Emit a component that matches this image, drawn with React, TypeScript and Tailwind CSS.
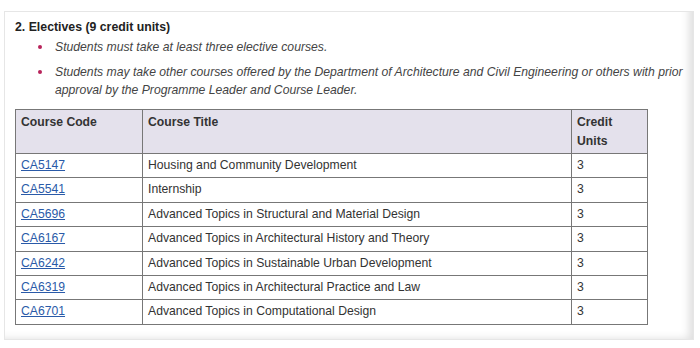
const courses = [
  { code: 'CA5147', title: 'Housing and Community Development', units: 3 },
  { code: 'CA5541', title: 'Internship', units: 3 },
  { code: 'CA5696', title: 'Advanced Topics in Structural and Material Design', units: 3 },
  { code: 'CA6167', title: 'Advanced Topics in Architectural History and Theory', units: 3 },
  { code: 'CA6242', title: 'Advanced Topics in Sustainable Urban Development', units: 3 },
  { code: 'CA6319', title: 'Advanced Topics in Architectural Practice and Law', units: 3 },
  { code: 'CA6701', title: 'Advanced Topics in Computational Design', units: 3 },
];

const notes = [
  'Students must take at least three elective courses.',
  'Students may take other courses offered by the Department of Architecture and Civil Engineering or others with prior approval by the Programme Leader and Course Leader.',
];

export default function App() {
  return (
    <div className="w-[700px] h-[348px] bg-white pt-[11px] pl-[4px] font-['Liberation_Sans',Arial,sans-serif] text-[#333]">
      <div className="w-[690px] h-[329px] border border-[#e6e6e6] shadow-[inset_-9px_-5px_8px_-5px_rgba(0,0,0,0.13)] pl-[10px] pt-[6px]">
        <h3 className="text-[12.3px] font-bold leading-[18px] text-[#222]">2. Electives (9 credit units)</h3>
        <ul className="mt-[2px] pl-[40px] pr-[2px] text-[12.2px] italic leading-[18px] text-[#444]">
          {notes.map((n) => (
            <li key={n} className="relative mb-[7px]">
              <span className="absolute left-[-17px] top-[7px] w-[3.5px] h-[3.5px] rounded-full bg-[#b8235a]" />
              {n}
            </li>
          ))}
        </ul>
        <table className="mt-[10px] w-[633px] border-collapse text-[12.2px] leading-[17.4px] text-[#333]">
          <thead className="bg-[#e4e1ec]">
            <tr className="leading-[19px]">
              <th className="w-[127px] border border-[#777] px-[5px] pt-[3px] pb-[2px] text-left align-top font-bold">Course Code</th>
              <th className="w-[429px] border border-[#777] px-[5px] pt-[3px] pb-[2px] text-left align-top font-bold">Course Title</th>
              <th className="border border-[#777] px-[5px] pt-[3px] pb-[2px] text-left align-top font-bold">Credit<br />Units</th>
            </tr>
          </thead>
          <tbody>
            {courses.map((c) => (
              <tr key={c.code}>
                <td className="border border-[#777] px-[5px] py-[3px]">
                  <a href="#" className="text-[#2a5aa8] underline">{c.code}</a>
                </td>
                <td className="border border-[#777] px-[5px] py-[3px]">{c.title}</td>
                <td className="border border-[#777] px-[5px] py-[3px]">{c.units}</td>
              </tr>
            ))}
          </tbody>
        </table>
      </div>
    </div>
  );
}
